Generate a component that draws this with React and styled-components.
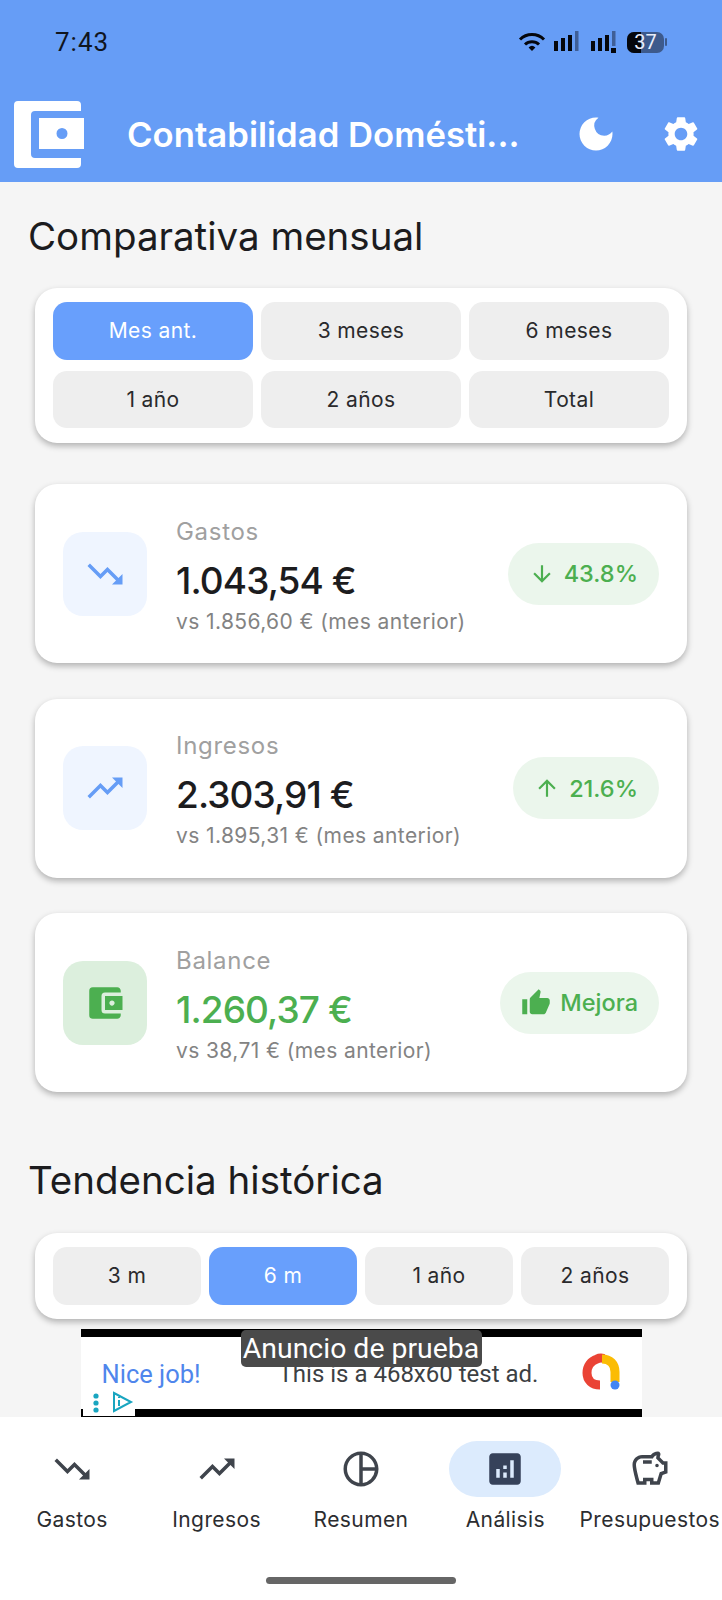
import React from 'react';
import styled, { createGlobalStyle } from 'styled-components';
import {
  MdTrendingDown,
  MdTrendingUp,
  MdAccountBalanceWallet,
  MdThumbUp,
  MdArrowDownward,
  MdArrowUpward,
  MdDarkMode,
  MdSettings,
  MdAnalytics,
  MdOutlinePieChart,
  MdOutlineSavings
} from 'react-icons/md';

const GlobalStyle = createGlobalStyle`
  html, body {
    margin: 0;
    padding: 0;
    background: #f5f5f5;
  }
  * {
    box-sizing: border-box;
  }
`;

const Screen = styled.div`
  width: 722px;
  height: 1600px;
  display: flex;
  flex-direction: column;
  overflow: hidden;
  background: #f5f5f5;
  font-family: Inter, 'Noto Sans', sans-serif;
  color: #1c1c1e;
`;

const Header = styled.header`
  flex: none;
  height: 182px;
  background: #669df6;
`;

const StatusBar = styled.div`
  height: 92px;
  display: flex;
  align-items: center;
  justify-content: space-between;
  padding: 0 55px 8px 55px;
`;

const Clock = styled.span`
  font-family: Roboto, sans-serif;
  font-size: 26px;
  letter-spacing: 1px;
  color: #10151f;
`;

const StatusIcons = styled.div`
  display: flex;
  align-items: center;
  gap: 7px;
`;

const Battery = styled.div`
  display: flex;
  align-items: center;
  gap: 1px;
`;

const BatteryBody = styled.div`
  position: relative;
  width: 37px;
  height: 21px;
  border-radius: 7px;
  overflow: hidden;
  background: #3d5a8c;
  display: flex;
  align-items: center;
  justify-content: center;
  font-family: Roboto, sans-serif;
  font-size: 20px;
  color: #e8eefb;
`;

const BatteryFill = styled.div`
  position: absolute;
  left: 0;
  top: 0;
  bottom: 0;
  width: 14px;
  background: #05070c;
`;

const BatteryValue = styled.span`
  position: relative;
`;

const BatteryNub = styled.div`
  width: 2px;
  height: 8px;
  border-radius: 1px;
  background: #3d5a8c;
`;

const Toolbar = styled.div`
  height: 90px;
  display: flex;
  align-items: center;
  padding: 0 20px 6px 14px;
  color: #fff;
`;

const Title = styled.h1`
  margin: 0 0 0 43px;
  flex: 1;
  font-size: 34.7px;
  line-height: 40px;
  font-weight: 600;
  white-space: nowrap;
`;

const ToolbarIcon = styled.span`
  display: flex;
  margin-left: ${(p) => p.$gap || 0}px;
`;

const Main = styled.main`
  flex: 1;
  min-height: 0;
  padding-top: 32px;
`;

const Heading = styled.h2`
  margin: ${(p) => p.$top || 0}px 0 ${(p) => p.$bottom || 30}px;
  padding-left: 28px;
  font-size: 38.5px;
  line-height: 44px;
  font-weight: 400;
`;

const Card = styled.section`
  margin: 0 35px;
  background: #fff;
  border-radius: 22px;
  box-shadow: 0 3px 6px rgba(0, 0, 0, 0.28);
`;

const ChipCard = styled(Card)`
  display: grid;
  grid-template-columns: repeat(${(p) => p.$cols}, 1fr);
  column-gap: 8px;
  row-gap: 11px;
  padding: 14px 18px 14.5px;
`;

const Chip = styled.div`
  height: 57.5px;
  display: flex;
  align-items: center;
  justify-content: center;
  border-radius: 14px;
  font-size: 21px;
  letter-spacing: 0.4px;
  background: ${(p) => (p.$active ? '#689ffc' : '#eeeeee')};
  color: ${(p) => (p.$active ? '#fff' : '#2a2a2c')};
`;

const MetricList = styled.div`
  display: flex;
  flex-direction: column;
  gap: 35.5px;
  margin-top: 41.5px;
`;

const MetricCard = styled(Card)`
  height: 179px;
  display: flex;
  align-items: center;
  padding: 0 28px;
`;

const MetricIcon = styled.div`
  flex: none;
  width: 84px;
  height: 84px;
  border-radius: 20px;
  display: flex;
  align-items: center;
  justify-content: center;
  background: ${(p) => (p.$good ? '#dcefdd' : '#eff5ff')};
  color: ${(p) => (p.$good ? '#4caf50' : '#669df6')};
`;

const MetricText = styled.div`
  flex: 1;
  margin-left: 29px;
  padding-top: 4px;
`;

const MetricLabel = styled.div`
  font-size: 24px;
  line-height: 30px;
  letter-spacing: 0.7px;
  color: #a0a0a0;
`;

const MetricAmount = styled.div`
  margin-top: 11px;
  font-size: 37px;
  line-height: 46px;
  font-weight: 500;
  letter-spacing: -0.9px;
  color: ${(p) => (p.$good ? '#4caf50' : '#1c1c1e')};
`;

const MetricCompare = styled.div`
  margin-top: 5px;
  font-size: 21px;
  line-height: 26px;
  letter-spacing: 0.4px;
  color: #838383;
`;

const Pill = styled.div`
  flex: none;
  height: 62px;
  padding: 0 21px;
  display: flex;
  align-items: center;
  gap: ${(p) => p.$gap}px;
  border-radius: 31px;
  background: #ebf6ec;
  color: #4caf50;
  font-size: 23.5px;
  font-weight: 500;
`;

const AdBanner = styled.div`
  position: relative;
  flex: none;
  align-self: center;
  width: 561px;
  height: 88px;
  padding: 8px 0;
  background: #000;
`;

const AdInner = styled.div`
  position: relative;
  height: 100%;
  display: flex;
  align-items: center;
  background: #fff;
  font-family: Roboto, sans-serif;
  font-size: 24px;
`;

const AdHeadline = styled.span`
  margin: 1px 0 0 21px;
  width: 177px;
  font-size: 25.5px;
  color: #4f86ec;
`;

const AdBody = styled.span`
  margin-top: 1px;
  width: 280px;
  color: #3c4043;
`;

const AdLogo = styled.span`
  display: flex;
  margin: -3px 0 0 23px;
`;

const AdBadge = styled.span`
  position: absolute;
  left: 2px;
  bottom: -7px;
  width: 52px;
  height: 30px;
  display: flex;
  align-items: center;
  background: #fff;
`;

const Toast = styled.div`
  position: absolute;
  left: 160px;
  top: 1px;
  width: 241px;
  height: 37px;
  display: flex;
  align-items: center;
  justify-content: center;
  border-radius: 5px;
  background: #4a4a4a;
  color: #fff;
  font-family: Roboto, sans-serif;
  font-size: 28.4px;
  white-space: nowrap;
`;

const BottomNav = styled.nav`
  flex: none;
  height: 183px;
  padding-top: 24px;
  display: flex;
  flex-direction: column;
  background: #fff;
`;

const NavItems = styled.div`
  display: grid;
  grid-template-columns: repeat(5, 1fr);
`;

const NavItem = styled.div`
  display: flex;
  flex-direction: column;
  align-items: center;
  color: #3f444c;
`;

const NavIcon = styled.div`
  width: 112px;
  height: 56px;
  display: flex;
  align-items: center;
  justify-content: center;
  border-radius: 28px;
  background: ${(p) => (p.$active ? '#dcebfd' : 'transparent')};
  color: ${(p) => (p.$active ? '#36425a' : '#3f444c')};
`;

const NavLabel = styled.span`
  margin-top: 9px;
  font-size: 21px;
  line-height: 28px;
  letter-spacing: 0.4px;
  white-space: nowrap;
  color: #2c2d30;
`;

const HomeBar = styled.div`
  width: 190px;
  height: 7px;
  margin: 43px auto 0;
  border-radius: 4px;
  background: #666;
`;

const Logo = () => (
  <svg width="70" height="67" viewBox="0 0 70 67" fill="#fff">
    <path
      fillRule="evenodd"
      d="M4 0H63a4 4 0 0 1 4 4V10H21a4 4 0 0 0-4 4V53a4 4 0 0 0 4 4H67V63a4 4 0 0 1-4 4H4a4 4 0 0 1-4-4V4a4 4 0 0 1 4-4Z"
    />
    <path
      fillRule="evenodd"
      d="M25 17H70V48H25ZM48 27a5.5 5.5 0 1 0 0 11a5.5 5.5 0 0 0 0-11Z"
    />
  </svg>
);

const Wifi = () => (
  <svg width="28" height="20" viewBox="0 0 28 20" fill="none" stroke="#05070c" strokeWidth="3">
    <path d="M2 7.5a17 17 0 0 1 24 0" />
    <path d="M7 12.5a10 10 0 0 1 14 0" />
    <path d="M14 19l-3.4-3.6a5 5 0 0 1 6.8 0Z" fill="#05070c" stroke="none" />
  </svg>
);

const Signal = ({ roaming }) => (
  <svg width="30" height="22" viewBox="0 0 30 22">
    <rect x="1" y="10" width="4" height="10" fill="#05070c" />
    <rect x="8" y="7" width="4" height="13" fill="#05070c" />
    <rect x="15" y="4" width="4" height="16" fill="#05070c" />
    <rect x="22" y="0" width="3.5" height={roaming ? 15 : 20} fill="#3f5f97" />
    {roaming && <rect x="21" y="17" width="5" height="5" fill="#05070c" />}
  </svg>
);

const AdSymbol = () => (
  <svg width="38" height="38" viewBox="0 0 38 38" fill="none" strokeWidth="9">
    <path d="M22 5.5c-2-.5-5-.5-7 .5C9 8 5 13 5 20c0 7 5 12 13 12" stroke="#ea4335" />
    <path d="M20 6c8 0 13 5 13 13v10" stroke="#fbbc04" />
    <circle cx="33" cy="32" r="4.5" fill="#4285f4" />
  </svg>
);

const AdChoices = () => (
  <svg width="52" height="26" viewBox="0 0 52 26" fill="none" stroke="#19a5c0">
    <circle cx="13" cy="8" r="2.6" fill="#19a5c0" stroke="none" />
    <circle cx="13" cy="15" r="2.6" fill="#19a5c0" stroke="none" />
    <circle cx="13" cy="22" r="2.6" fill="#19a5c0" stroke="none" />
    <path d="M31 5l17 9-17 9Z" strokeWidth="2" />
    <path d="M36 12v6M36 9v1" strokeWidth="2" />
  </svg>
);

const periods = ['Mes ant.', '3 meses', '6 meses', '1 año', '2 años', 'Total'];
const trendRanges = ['3 m', '6 m', '1 año', '2 años'];

const metrics = [
  {
    label: 'Gastos',
    amount: '1.043,54 €',
    compare: 'vs 1.856,60 € (mes anterior)',
    icon: <MdTrendingDown size={42} />,
    badge: <MdArrowDownward size={26} />,
    badgeText: '43.8%',
    gap: 9
  },
  {
    label: 'Ingresos',
    amount: '2.303,91 €',
    compare: 'vs 1.895,31 € (mes anterior)',
    icon: <MdTrendingUp size={42} />,
    badge: <MdArrowUpward size={26} />,
    badgeText: '21.6%',
    gap: 9
  },
  {
    label: 'Balance',
    amount: '1.260,37 €',
    compare: 'vs 38,71 € (mes anterior)',
    icon: <MdAccountBalanceWallet size={42} />,
    badge: <MdThumbUp size={30} />,
    badgeText: 'Mejora',
    gap: 9,
    good: true
  }
];

const navItems = [
  { label: 'Gastos', icon: <MdTrendingDown size={42} /> },
  { label: 'Ingresos', icon: <MdTrendingUp size={42} /> },
  { label: 'Resumen', icon: <MdOutlinePieChart size={42} /> },
  { label: 'Análisis', icon: <MdAnalytics size={42} />, active: true },
  { label: 'Presupuestos', icon: <MdOutlineSavings size={42} /> }
];

export default function App() {
  return (
    <Screen>
      <GlobalStyle />
      <Header>
        <StatusBar>
          <Clock>7:43</Clock>
          <StatusIcons>
            <Wifi />
            <Signal />
            <Signal roaming />
            <Battery>
              <BatteryBody>
                <BatteryFill />
                <BatteryValue>37</BatteryValue>
              </BatteryBody>
              <BatteryNub />
            </Battery>
          </StatusIcons>
        </StatusBar>
        <Toolbar>
          <Logo />
          <Title>Contabilidad Domésti...</Title>
          <ToolbarIcon>
            <MdDarkMode size={44} />
          </ToolbarIcon>
          <ToolbarIcon $gap={42}>
            <MdSettings size={42} />
          </ToolbarIcon>
        </Toolbar>
      </Header>

      <Main>
        <Heading>Comparativa mensual</Heading>
        <ChipCard $cols={3}>
          {periods.map((p, i) => (
            <Chip key={p} $active={i === 0}>
              {p}
            </Chip>
          ))}
        </ChipCard>

        <MetricList>
          {metrics.map((m) => (
            <MetricCard key={m.label}>
              <MetricIcon $good={m.good}>{m.icon}</MetricIcon>
              <MetricText>
                <MetricLabel>{m.label}</MetricLabel>
                <MetricAmount $good={m.good}>{m.amount}</MetricAmount>
                <MetricCompare>{m.compare}</MetricCompare>
              </MetricText>
              <Pill $gap={m.gap}>
                {m.badge}
                {m.badgeText}
              </Pill>
            </MetricCard>
          ))}
        </MetricList>

        <Heading $top={66} $bottom={31}>
          Tendencia histórica
        </Heading>
        <ChipCard $cols={4}>
          {trendRanges.map((r, i) => (
            <Chip key={r} $active={i === 1}>
              {r}
            </Chip>
          ))}
        </ChipCard>
      </Main>

      <AdBanner>
        <AdInner>
          <AdHeadline>Nice job!</AdHeadline>
          <AdBody>This is a 468x60 test ad.</AdBody>
          <AdLogo>
            <AdSymbol />
          </AdLogo>
          <AdBadge>
            <AdChoices />
          </AdBadge>
        </AdInner>
        <Toast>Anuncio de prueba</Toast>
      </AdBanner>

      <BottomNav>
        <NavItems>
          {navItems.map((n) => (
            <NavItem key={n.label}>
              <NavIcon $active={n.active}>{n.icon}</NavIcon>
              <NavLabel>{n.label}</NavLabel>
            </NavItem>
          ))}
        </NavItems>
        <HomeBar />
      </BottomNav>
    </Screen>
  );
}
